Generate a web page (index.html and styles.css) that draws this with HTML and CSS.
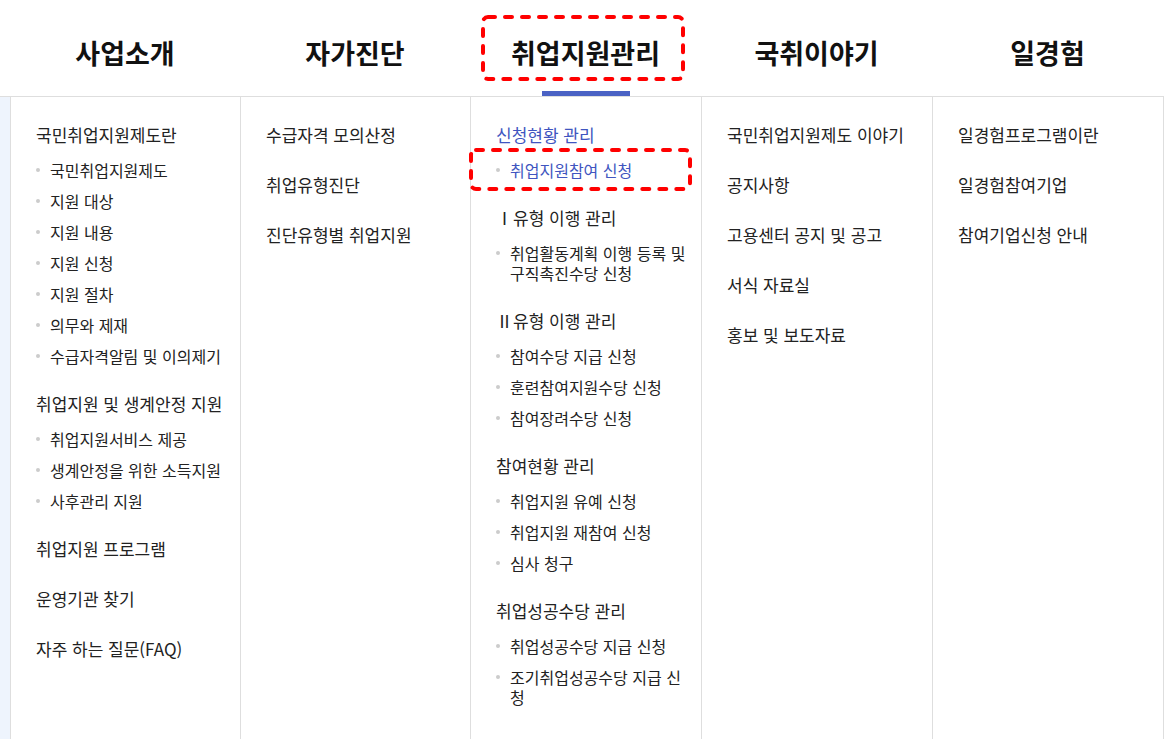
FILE: index.html
```html
<!DOCTYPE html>
<html lang="ko">
<head>
    <meta charset="UTF-8">
    <meta name="viewport" content="width=device-width, initial-scale=1.0">
    <title>국민취업지원제도 메뉴</title>
    <link rel="stylesheet" href="styles.css">
</head>
<body>

<div class="page">
    <!-- 상단 메뉴 -->
    <div class="gnb">
        <div class="gnb-item">사업소개</div>
        <div class="gnb-item">자가진단</div>
        <div class="gnb-item active">취업지원관리</div>
        <div class="gnb-item">국취이야기</div>
        <div class="gnb-item">일경험</div>
    </div>

    <!-- 전체 메뉴 -->
    <div class="menu">
        <div class="col">
            <div class="group">
                <div class="title">국민취업지원제도란</div>
                <ul>
                    <li>국민취업지원제도</li>
                    <li>지원 대상</li>
                    <li>지원 내용</li>
                    <li>지원 신청</li>
                    <li>지원 절차</li>
                    <li>의무와 제재</li>
                    <li>수급자격알림 및 이의제기</li>
                </ul>
            </div>
            <div class="group">
                <div class="title">취업지원 및 생계안정 지원</div>
                <ul>
                    <li>취업지원서비스 제공</li>
                    <li>생계안정을 위한 소득지원</li>
                    <li>사후관리 지원</li>
                </ul>
            </div>
            <div class="group"><div class="title">취업지원 프로그램</div></div>
            <div class="group"><div class="title">운영기관 찾기</div></div>
            <div class="group"><div class="title">자주 하는 질문(FAQ)</div></div>
        </div>

        <div class="col">
            <div class="group"><div class="title">수급자격 모의산정</div></div>
            <div class="group"><div class="title">취업유형진단</div></div>
            <div class="group"><div class="title">진단유형별 취업지원</div></div>
        </div>

        <div class="col">
            <div class="group">
                <div class="title on">신청현황 관리</div>
                <ul>
                    <li class="on">취업지원참여 신청</li>
                </ul>
            </div>
            <div class="group">
                <div class="title">Ⅰ유형 이행 관리</div>
                <ul>
                    <li>취업활동계획 이행 등록 및 구직촉진수당 신청</li>
                </ul>
            </div>
            <div class="group">
                <div class="title">Ⅱ유형 이행 관리</div>
                <ul>
                    <li>참여수당 지급 신청</li>
                    <li>훈련참여지원수당 신청</li>
                    <li>참여장려수당 신청</li>
                </ul>
            </div>
            <div class="group">
                <div class="title">참여현황 관리</div>
                <ul>
                    <li>취업지원 유예 신청</li>
                    <li>취업지원 재참여 신청</li>
                    <li>심사 청구</li>
                </ul>
            </div>
            <div class="group">
                <div class="title">취업성공수당 관리</div>
                <ul>
                    <li>취업성공수당 지급 신청</li>
                    <li>조기취업성공수당 지급 신청</li>
                </ul>
            </div>
        </div>

        <div class="col">
            <div class="group"><div class="title">국민취업지원제도 이야기</div></div>
            <div class="group"><div class="title">공지사항</div></div>
            <div class="group"><div class="title">고용센터 공지 및 공고</div></div>
            <div class="group"><div class="title">서식 자료실</div></div>
            <div class="group"><div class="title">홍보 및 보도자료</div></div>
        </div>

        <div class="col">
            <div class="group"><div class="title">일경험프로그램이란</div></div>
            <div class="group"><div class="title">일경험참여기업</div></div>
            <div class="group"><div class="title">참여기업신청 안내</div></div>
        </div>
    </div>

    <!-- 강조 표시 -->
    <svg class="mark mark-top" width="206" height="70" viewBox="0 0 206 70">
        <rect x="3" y="3" width="200" height="62" rx="5" />
    </svg>
    <svg class="mark mark-sub" width="226" height="46" viewBox="0 0 226 46">
        <rect x="3" y="3" width="219" height="39" rx="5" />
    </svg>
</div>

</body>
</html>
```

FILE: styles.css
```css
body {
    margin: 0;
    font-family: "Noto Sans CJK KR", "Noto Sans", sans-serif;
    color: #222;
    background-color: #fff;
}
.page {
    position: relative;
    width: 1164px;
    height: 739px;
    overflow: hidden;
}
.gnb {
    display: grid;
    grid-template-columns: 230px 230px 231px 231px 231px;
    height: 96px;
    padding-left: 10px;
    border-bottom: 1px solid #dedede;
}
.gnb-item {
    position: relative;
    display: flex;
    align-items: center;
    justify-content: center;
    padding-top: 8px;
    font-size: 27px;
    font-weight: bold;
    color: #111;
}
.gnb-item.active::after {
    content: "";
    position: absolute;
    left: 50%;
    bottom: 0;
    width: 88px;
    height: 5px;
    margin-left: -44px;
    background-color: #4a62c4;
}
.menu {
    display: grid;
    grid-template-columns: 230px 230px 231px 231px 232px;
    height: 642px;
    padding-left: 10px;
    background-color: #eef4fd;
}
.col {
    background-color: #fff;
    border-left: 1px solid #dedede;
    padding: 28px 8px 0 25px;
}
.col:last-child {
    border-right: 1px solid #dedede;
}
.group + .group {
    margin-top: 30px;
}
.title {
    font-size: 17px;
    line-height: 20px;
    color: #222;
}
.title.on {
    color: #4055c0;
}
ul {
    list-style: none;
    margin: 15px 0 -2px;
    padding: 0;
}
li {
    position: relative;
    padding-left: 14px;
    font-size: 16px;
    line-height: 20px;
    color: #222;
}
li + li {
    margin-top: 11px;
}
li::before {
    content: "";
    position: absolute;
    left: 0;
    top: 8px;
    width: 4px;
    height: 4px;
    border-radius: 50%;
    background-color: #cccccc;
}
li.on {
    color: #4055c0;
}
.mark {
    position: absolute;
}
.mark rect {
    fill: none;
    stroke: #ff0000;
    stroke-width: 4;
    stroke-dasharray: 7 10;
    stroke-linecap: round;
}
.mark-top {
    left: 480px;
    top: 14px;
}
.mark-sub {
    left: 468px;
    top: 147px;
}
```
